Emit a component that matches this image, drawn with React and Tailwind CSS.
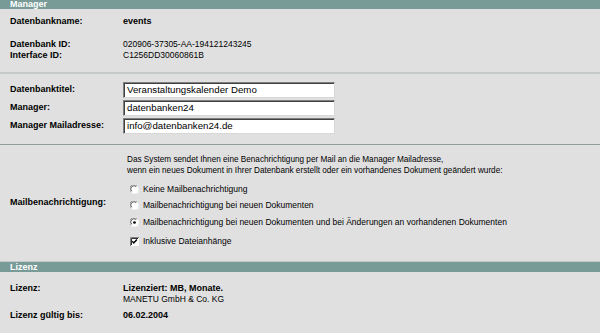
function Bar({ title, className = '' }) {
  return (
    <div className={`bg-[#789b97] text-white font-bold text-[9px] pl-[10px] flex items-center ${className}`}>
      {title}
    </div>
  )
}

function Row({ label, children, className = '' }) {
  return (
    <div className={`flex leading-[11px] ${className}`}>
      <div className="w-[123px] shrink-0 pl-[10px] font-bold text-[9px]">{label}</div>
      <div className="text-[8.5px]">{children}</div>
    </div>
  )
}

function Field({ label, value }) {
  return (
    <div className="flex h-[16px]">
      <div className="w-[123px] shrink-0 pl-[10px] pt-[2px] font-bold text-[9px] leading-[11px]">{label}</div>
      <div className="w-[212px] h-[16px] bg-white border border-t-[#808080] border-l-[#808080] border-r-[#d8d8d8] border-b-[#d8d8d8] shadow-[inset_1px_1px_0_#404040] pl-[3px] flex items-center text-[9.7px]">
        {value}
      </div>
    </div>
  )
}

function Radio({ checked, label }) {
  return (
    <div className="flex items-center h-[16.5px] gap-[4px]">
      <svg width="9" height="9" viewBox="0 0 12 12" className="shrink-0">
        <circle cx="6" cy="6" r="5.5" fill="#ffffff" />
        <path d="M1.2 9.2 A5.3 5.3 0 0 1 9.2 1.2" fill="none" stroke="#808080" strokeWidth="1" />
        <path d="M2.3 8.3 A4.2 4.2 0 0 1 8.3 2.3" fill="none" stroke="#303030" strokeWidth="1" />
        <path d="M10.8 2.8 A5.3 5.3 0 0 1 2.8 10.8" fill="none" stroke="#f4f4f4" strokeWidth="1" />
        {checked && <circle cx="6" cy="6" r="1.8" fill="#000000" />}
      </svg>
      <span>{label}</span>
    </div>
  )
}

export default function App() {
  return (
    <div className="w-[600px] h-[333px] overflow-hidden bg-[#e0e0e0] text-black font-['Liberation_Sans',Arial,sans-serif]">
      <Bar title="Manager" className="h-[9px] leading-[9px]" />

      <div className="pt-[7px]">
        <Row label="Datenbankname:">
          <span className="font-bold text-[9px]">events</span>
        </Row>
        <Row label="Datenbank ID:" className="mt-[12px]">020906-37305-AA-194121243245</Row>
        <Row label="Interface ID:">C1256DD30060861B</Row>
      </div>

      <div className="mt-[11px] h-[2px] bg-[#c5c9c8]" />

      <div className="pt-[8px] flex flex-col gap-[2px]">
        <Field label="Datenbanktitel:" value="Veranstaltungskalender Demo" />
        <Field label="Manager:" value="datenbanken24" />
        <Field label="Manager Mailadresse:" value="info@datenbanken24.de" />
      </div>

      <div className="mt-[10px] h-[1px] bg-[#8e9e9c]" />

      <div className="flex h-[116px]">
        <div className="w-[123px] shrink-0 pl-[10px] font-bold text-[9px] flex items-center">Mailbenachrichtigung:</div>
        <div className="pt-[9px] leading-[11px] text-[8.5px]">
          <div className="pl-[4px] text-[8.2px]">
            Das System sendet Ihnen eine Benachrichtigung per Mail an die Manager Mailadresse,
            <br />
            wenn ein neues Dokument in Ihrer Datenbank erstellt oder ein vorhandenes Dokument geändert wurde:
          </div>
          <div className="pt-[5px] pl-[7px]">
            <Radio label="Keine Mailbenachrichtigung" />
            <Radio label="Mailbenachrichtigung bei neuen Dokumenten" />
            <Radio checked label="Mailbenachrichtigung bei neuen Dokumenten und bei Änderungen an vorhandenen Dokumenten" />
            <div className="flex items-center h-[16px] gap-[4px] mt-[3px]">
              <svg width="9" height="9" viewBox="0 0 9 9" className="shrink-0">
                <rect x="0" y="0" width="9" height="9" fill="#ffffff" />
                <path d="M0.5 9 V0.5 H9" fill="none" stroke="#808080" strokeWidth="1" />
                <path d="M1.5 8 V1.5 H8" fill="none" stroke="#303030" strokeWidth="1" />
                <path d="M2.3 4.3 L3.8 5.9 L6.9 2.6" fill="none" stroke="#000000" strokeWidth="1.5" />
              </svg>
              <span>Inklusive Dateianhänge</span>
            </div>
          </div>
        </div>
      </div>

      <div className="h-[1px] bg-[#c5c9c8]" />
      <Bar title="Lizenz" className="h-[10px] leading-[10px]" />

      <div className="pt-[11px]">
        <Row label="Lizenz:">
          <div className="font-bold text-[9px]">Lizenziert: MB, Monate.</div>
          <div>MANETU GmbH &amp; Co. KG</div>
        </Row>
        <Row label="Lizenz gültig bis:" className="mt-[5px]">
          <span className="font-bold text-[9px]">06.02.2004</span>
        </Row>
      </div>
    </div>
  )
}
